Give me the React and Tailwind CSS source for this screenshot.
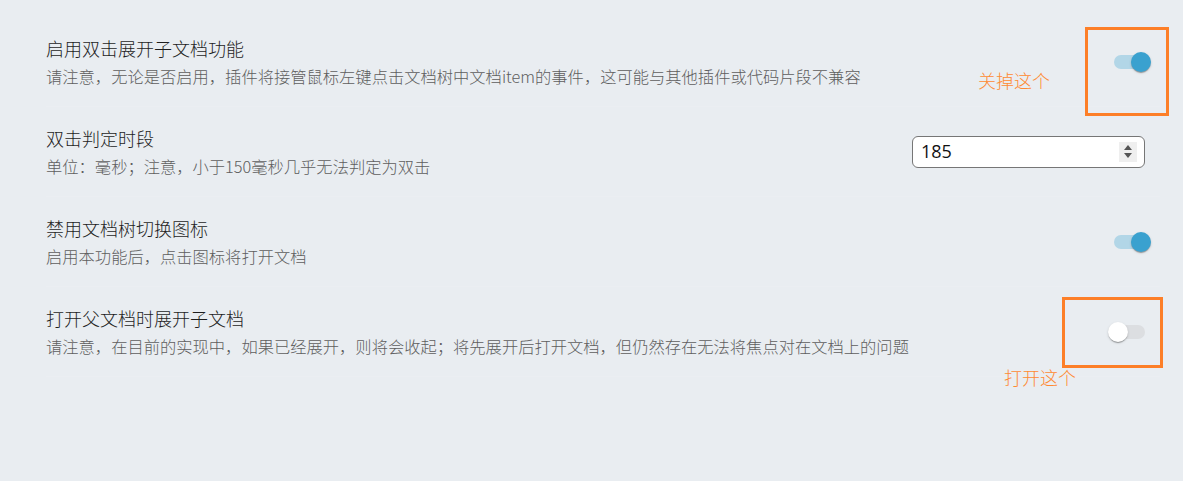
import React from "react";

const font = { fontFamily: '"Noto Sans CJK SC", "Noto Sans", sans-serif' };

function Switch({ on }) {
  return (
    <div className="relative w-[58px] h-[38px] shrink-0">
      <div
        className={
          "absolute left-[12px] top-[12px] w-[34px] h-[14px] rounded-full " +
          (on ? "bg-[#b2d6e7]" : "bg-[#dcdee1]")
        }
      />
      <div
        className={
          "absolute top-[9px] w-[20px] h-[20px] rounded-full shadow-[0_2px_1px_-1px_rgba(0,0,0,0.2),0_1px_1px_0_rgba(0,0,0,0.14),0_1px_3px_0_rgba(0,0,0,0.12)] " +
          (on ? "left-[29px] bg-[#3aa1cf]" : "left-[9px] bg-white")
        }
      />
    </div>
  );
}

function NumberBox({ value }) {
  return (
    <div className="mr-[15px] w-[233px] h-[32px] bg-white border border-[#767676] rounded-[6px] flex items-center pl-[8px] pr-[7px]">
      <span className="flex-1 text-[18px] text-[#111]" style={{ fontFamily: '"Open Sans", sans-serif' }}>
        {value}
      </span>
      <div className="w-[18px] h-[20px] bg-[#efefef] flex flex-col items-center justify-center gap-[3px]">
        <svg width="8" height="5" viewBox="0 0 8 5"><path d="M4 0L8 5H0z" fill="#555" /></svg>
        <svg width="8" height="5" viewBox="0 0 8 5"><path d="M0 0h8L4 5z" fill="#555" /></svg>
      </div>
    </div>
  );
}

function Row({ title, desc, children }) {
  return (
    <div className="flex items-center justify-between py-[18px] border-b border-[#ebeef2]">
      <div>
        <div className="text-[18px] leading-[26px] font-light text-[#1e1e1e]">{title}</div>
        <div className="mt-[3px] text-[16.3px] leading-[24px] font-light text-[#5e5e5e]">{desc}</div>
      </div>
      {children}
    </div>
  );
}

export default function App() {
  return (
    <div className="relative w-[1183px] h-[481px] bg-[#e9edf1] overflow-hidden" style={font}>
      <div className="pt-[17px] pl-[46px] pr-[23px]">
        <Row
          title="启用双击展开子文档功能"
          desc="请注意，无论是否启用，插件将接管鼠标左键点击文档树中文档item的事件，这可能与其他插件或代码片段不兼容"
        >
          <Switch on />
        </Row>
        <Row title="双击判定时段" desc="单位：毫秒；注意，小于150毫秒几乎无法判定为双击">
          <NumberBox value="185" />
        </Row>
        <Row title="禁用文档树切换图标" desc="启用本功能后，点击图标将打开文档">
          <Switch on />
        </Row>
        <Row
          title="打开父文档时展开子文档"
          desc="请注意，在目前的实现中，如果已经展开，则将会收起；将先展开后打开文档，但仍然存在无法将焦点对在文档上的问题"
        >
          <div className="mr-[3px]">
            <Switch on={false} />
          </div>
        </Row>
      </div>

      <div className="absolute left-[1085px] top-[27px] w-[84px] h-[89px] border-[3px] border-[#fd7f28]" />
      <div className="absolute left-[978px] top-[67px] text-[18px] leading-[26px] font-light text-[#ff8a33]">关掉这个</div>

      <div className="absolute left-[1062px] top-[297px] w-[101px] h-[71px] border-[3px] border-[#fd7f28]" />
      <div className="absolute left-[1004px] top-[364px] text-[18px] leading-[26px] font-light text-[#ff8a33]">打开这个</div>
    </div>
  );
}
